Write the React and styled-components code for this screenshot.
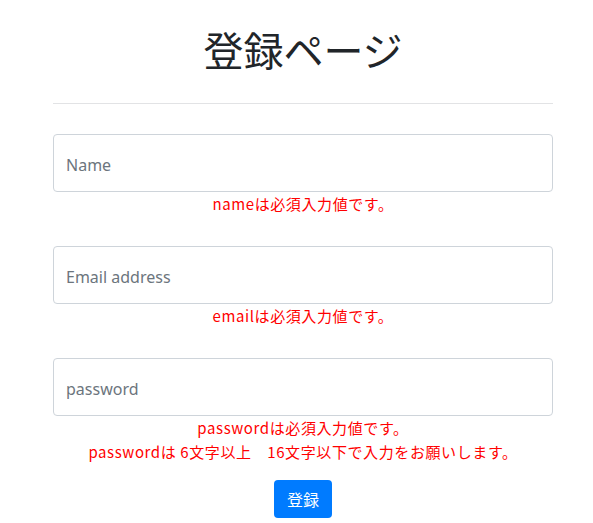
import React, { useState } from 'react'
import styled, { createGlobalStyle } from 'styled-components'

const GlobalStyle = createGlobalStyle`
  body {
    margin: 0;
    background: #fff;
    font-family: "Segoe UI", "Noto Sans", "Noto Sans CJK JP", sans-serif;
  }
`

const Page = styled.div`
  width: 500px;
  margin-left: 53px;
  padding-top: 25px;
`

const Title = styled.h1`
  margin: 0;
  font-size: 40px;
  line-height: 48px;
  font-weight: 400;
  text-align: center;
  color: #212529;
  font-family: "Noto Sans CJK JP", sans-serif;
`

const Rule = styled.hr`
  margin: 30px 0 30px;
  border: none;
  border-top: 1px solid #e2e3e5;
`

const Group = styled.div`
  margin-bottom: ${({ $last }) => ($last ? '16px' : '30px')};
`

const Input = styled.input`
  display: block;
  box-sizing: border-box;
  width: 100%;
  height: 58px;
  padding: 3px 12px 0;
  border: 1px solid #ced4da;
  border-radius: 4px;
  font-size: 16px;
  font-family: "Noto Sans", "Noto Sans CJK JP", sans-serif;
  color: #495057;
  outline: none;

  &::placeholder {
    color: #6c757d;
  }
`

const Error = styled.div`
  text-align: center;
  color: #ff0000;
  font-size: 15px;
  line-height: 24px;
  letter-spacing: 0.6px;
  font-family: "Noto Sans CJK JP", sans-serif;
`

const Submit = styled.button`
  display: block;
  margin: 0 auto;
  width: 58px;
  height: 38px;
  border: none;
  border-radius: 4px;
  background: #007bff;
  color: #fff;
  font-size: 16px;
  font-family: "Noto Sans CJK JP", sans-serif;
  cursor: pointer;
`

export default function App() {
  const [name, setName] = useState('')
  const [email, setEmail] = useState('')
  const [password, setPassword] = useState('')

  return <>
    <GlobalStyle />
    <Page>
      <Title>登録ページ</Title>
      <Rule />
      <Group>
        <Input placeholder="Name" value={name} onChange={e => setName(e.target.value)} />
        <Error>nameは必須入力値です。</Error>
      </Group>
      <Group>
        <Input placeholder="Email address" value={email} onChange={e => setEmail(e.target.value)} />
        <Error>emailは必須入力値です。</Error>
      </Group>
      <Group $last>
        <Input type="password" placeholder="password" value={password} onChange={e => setPassword(e.target.value)} />
        <Error>passwordは必須入力値です。</Error>
        <Error>passwordは 6文字以上　16文字以下で入力をお願いします。</Error>
      </Group>
      <Submit>登録</Submit>
    </Page>
  </>
}
